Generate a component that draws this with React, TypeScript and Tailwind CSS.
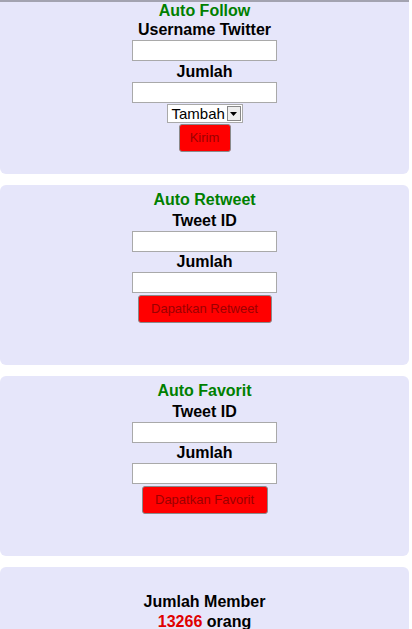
import React from 'react';

function Field() {
  return (
    <input
      type="text"
      className="block mx-auto w-[145px] h-[21px] bg-white border border-[#a9a9a9] outline-none"
    />
  );
}

function RedButton({ label, className = '' }: { label: string; className?: string }) {
  return (
    <button
      className={`mx-auto block h-[28px] bg-[#ff0000] text-[#9b0000] text-[13px] border border-[#8a8a8a] rounded-[3px] ${className}`}
    >
      {label}
    </button>
  );
}

function Card({ children, first = false }: { children: React.ReactNode; first?: boolean }) {
  return (
    <div
      className={`w-[409px] rounded-md bg-[#e6e6fa] text-center ${
        first ? 'h-[174px] border-t-2 border-[#a3a3b0] rounded-t-none' : 'h-[180px] pt-[5px]'
      }`}
    >
      {children}
    </div>
  );
}

export default function App() {
  return (
    <div
      className="min-h-screen bg-white text-black font-bold text-[16px] leading-[20px]"
      style={{ fontFamily: '"Liberation Sans", Arial, sans-serif' }}
    >
      <div className="flex flex-col gap-[11px]">
        {/* Follow */}
        <Card first>
          <div className="text-[#008000] leading-[17px]">Auto Follow</div>
          <div className="leading-[21px]">Username Twitter</div>
          <Field />
          <div className="leading-[21px]">Jumlah</div>
          <Field />
          <div className="mt-[1px] mx-auto w-[76px] h-[19px] flex items-center justify-between bg-white border border-[#a9a9a9] font-normal text-[15px] pl-[4px] pr-[1px]">
            <span className="leading-[17px]">Tambah</span>
            <span className="w-[14px] h-[15px] flex items-center justify-center border border-[#888] bg-[#eee]">
              <svg width="7" height="4" viewBox="0 0 7 4">
                <path d="M0 0h7L3.5 4z" fill="#000" />
              </svg>
            </span>
          </div>
          <RedButton label="Kirim" className="mt-[1px] w-[52px] font-normal" />
        </Card>

        {/* Retweet */}
        <Card>
          <div className="text-[#008000]">Auto Retweet</div>
          <div className="leading-[21px]">Tweet ID</div>
          <Field />
          <div>Jumlah</div>
          <Field />
          <RedButton label="Dapatkan Retweet" className="mt-[2px] w-[134px] font-normal" />
        </Card>

        {/* Favorit */}
        <Card>
          <div className="text-[#008000]">Auto Favorit</div>
          <div className="leading-[21px]">Tweet ID</div>
          <Field />
          <div>Jumlah</div>
          <Field />
          <RedButton label="Dapatkan Favorit" className="mt-[2px] w-[126px] font-normal" />
        </Card>

        {/* Member */}
        <Card>
          <div>&nbsp;</div>
          <div>Jumlah Member</div>
          <div>
            <span className="text-[#e00000]">13266</span> orang
          </div>
        </Card>
      </div>
    </div>
  );
}
